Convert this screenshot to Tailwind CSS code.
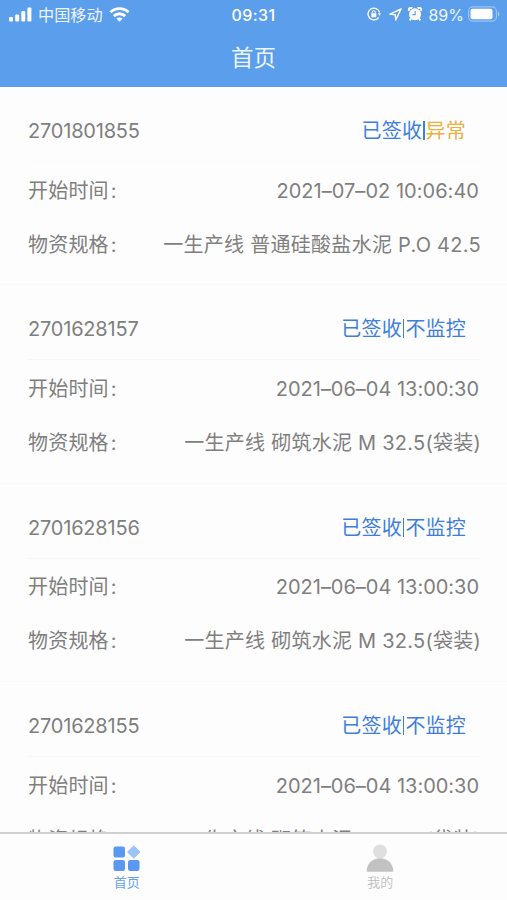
<!DOCTYPE html>
<html lang="zh-CN">
<head>
    <meta charset="UTF-8">
    <meta name="viewport" content="width=device-width, initial-scale=1.0">
    <title>首页</title>
    <script src="https://cdn.jsdelivr.net/npm/@tailwindcss/browser@4"></script>
</head>
<body class="bg-[#fdfdfd] font-['Inter','Noto_Sans_CJK_SC',sans-serif]">
<div class="flex flex-col h-[900px] w-[507px] overflow-hidden">
    <!-- 顶部 -->
    <header class="h-[87px] shrink-0 bg-[#5b9eeb] text-white">
        <div class="h-7 flex items-center justify-between pl-[9px] pr-[7px]">
            <div class="flex items-center w-[180px]">
                <svg class="w-[23px] h-[15px]" viewBox="0 0 23 15" fill="#fff">
                    <rect x="0" y="10" width="4" height="4.5" rx="1"/>
                    <rect x="6.2" y="7.5" width="4" height="7" rx="1"/>
                    <rect x="12.3" y="4" width="4" height="10.5" rx="1"/>
                    <rect x="18.4" y="0.5" width="4" height="14" rx="1"/>
                </svg>
                <span class="ml-[6px] pt-px text-[16.2px] leading-7 text-white/90">中国移动</span>
                <svg class="ml-[6px] w-[21px] h-[15px]" viewBox="0 0 20 15" fill="none" stroke="#fff" stroke-width="2.9">
                    <path d="M1 5.3C6 .4 14 .4 19 5.3"/>
                    <path d="M4.3 9.1c3.2-3.1 8.2-3.1 11.4 0"/>
                    <path d="M10 14.7 6.9 11.6c1.8-1.5 4.4-1.5 6.2 0z" fill="#fff" stroke="none"/>
                </svg>
            </div>
            <span class="pt-px text-base font-medium leading-7 tracking-[0.4px]">09:31</span>
            <div class="flex items-center justify-end w-[182px]">
                <svg class="w-[14px] h-[14px]" viewBox="0 0 14 14" fill="none" stroke="#fff" stroke-width="1.3">
                    <path d="M11.8 10.300A5.900 5.900 0 1 1 12.600 5.400"/>
                    <path d="M10.800 6.200h3.200l-1.400 2.500z" fill="#fff" stroke="none"/>
                    <rect x="4.300" y="6.200" width="5" height="4" rx=".6" fill="#fff" stroke="none"/>
                    <path d="M5.300 6.400V5.200a1.500 1.500 0 0 1 3 0v1.200" stroke-width="1"/>
                </svg>
                <svg class="ml-2 w-[13px] h-[13px]" viewBox="0 0 13 13" fill="none" stroke="#fff" stroke-width="1.5" stroke-linejoin="round">
                    <path d="M12 1 1 6.1l5.3.6.5 5.3z"/>
                </svg>
                <svg class="ml-[6px] w-[14px] h-[14px]" viewBox="0 0 14 14">
                    <circle cx="7" cy="7.3" r="6" fill="#fff"/>
                    <path d="M1.200 3.800a2 2 0 0 1 3-2.600M12.800 3.800a2 2 0 0 0-3-2.600M3 11.500 1.700 13.300M11 11.500l1.300 1.800" stroke="#fff" stroke-width="2" fill="none"/>
                    <path d="M7.2 4v3.6H4.4" fill="none" stroke="#5b9eeb" stroke-width="1.1"/>
                </svg>
                <span class="ml-[6px] pt-px text-[16px] leading-7 text-white/90">89%</span>
                <svg class="ml-1 w-8 h-4" viewBox="0 0 32 16">
                    <rect x=".6" y=".9" width="27.8" height="14.2" rx="4" fill="none" stroke="#fff" stroke-opacity=".4" stroke-width="1.1"/>
                    <rect x="2.5" y="2.7" width="22" height="10.6" rx="2" fill="#fff"/>
                    <path d="M30 5.5c1.7.6 1.7 4.4 0 5z" fill="#fff" fill-opacity=".5"/>
                </svg>
            </div>
        </div>
        <h1 class="pt-px text-center text-[22.5px] leading-[58px] text-white/90">首页</h1>
    </header>

    <!-- 运单列表 -->
    <main class="flex-1 min-h-0 overflow-hidden text-xl text-[#7f7f7f]">
        <section class="h-[198.4px] border-b border-[#fafafa]">
            <div class="h-[75px] pt-[14px] mx-7 pr-[13px] flex items-center justify-between border-b border-[#fbfbfb]">
                <span class="tracking-[-0.2px]">2701801855</span>
                <span class="text-[#3f7fdc] tracking-[0.2px]">已签收<span class="inline-block w-[1.5px] h-[19px] mx-px align-[-2px] bg-[#3f7fdc]"></span><span class="text-[#ebb040]">异常</span></span>
            </div>
            <div class="h-[54px] pt-[3px] mx-7 flex items-center justify-between">
                <span class="tracking-[0.2px]">开始时间<span class="ml-0.5">:</span></span>
                <span class="tracking-[0.03px]">2021–07–02 10:06:40</span>
            </div>
            <div class="h-[54px] pt-[3px] mx-7 flex items-center justify-between">
                <span class="tracking-[0.2px]">物资规格<span class="ml-0.5">:</span></span>
                <span class="-mr-0.5 tracking-[0.28px]">一生产线 普通硅酸盐水泥 P.O 42.5</span>
            </div>
        </section>
        <section class="h-[198.4px] border-b border-[#fafafa]">
            <div class="h-[75px] pt-[14px] mx-7 pr-[13px] flex items-center justify-between border-b border-[#f7f7f7]">
                <span class="tracking-[-0.2px]">2701628157</span>
                <span class="text-[#3f7fdc] tracking-[0.2px]">已签收<span class="inline-block w-[1.5px] h-[19px] mx-px align-[-2px] bg-[#3f7fdc]"></span>不监控</span>
            </div>
            <div class="h-[54px] pt-[3px] mx-7 flex items-center justify-between">
                <span class="tracking-[0.2px]">开始时间<span class="ml-0.5">:</span></span>
                <span class="tracking-[-0.02px]">2021–06–04 13:00:30</span>
            </div>
            <div class="h-[54px] pt-[3px] mx-7 flex items-center justify-between">
                <span class="tracking-[0.2px]">物资规格<span class="ml-0.5">:</span></span>
                <span class="-mr-0.5 tracking-[0.25px]">一生产线 砌筑水泥 M 32.5(袋装)</span>
            </div>
        </section>
        <section class="h-[198.4px] border-b border-[#fafafa]">
            <div class="h-[75px] pt-[14px] mx-7 pr-[13px] flex items-center justify-between border-b border-[#f7f7f7]">
                <span class="tracking-[-0.2px]">2701628156</span>
                <span class="text-[#3f7fdc] tracking-[0.2px]">已签收<span class="inline-block w-[1.5px] h-[19px] mx-px align-[-2px] bg-[#3f7fdc]"></span>不监控</span>
            </div>
            <div class="h-[54px] pt-[3px] mx-7 flex items-center justify-between">
                <span class="tracking-[0.2px]">开始时间<span class="ml-0.5">:</span></span>
                <span class="tracking-[-0.02px]">2021–06–04 13:00:30</span>
            </div>
            <div class="h-[54px] pt-[3px] mx-7 flex items-center justify-between">
                <span class="tracking-[0.2px]">物资规格<span class="ml-0.5">:</span></span>
                <span class="-mr-0.5 tracking-[0.25px]">一生产线 砌筑水泥 M 32.5(袋装)</span>
            </div>
        </section>
        <section class="h-[198.4px]">
            <div class="h-[75px] pt-[14px] mx-7 pr-[13px] flex items-center justify-between border-b border-[#f7f7f7]">
                <span class="tracking-[-0.2px]">2701628155</span>
                <span class="text-[#3f7fdc] tracking-[0.2px]">已签收<span class="inline-block w-[1.5px] h-[19px] mx-px align-[-2px] bg-[#3f7fdc]"></span>不监控</span>
            </div>
            <div class="h-[54px] pt-[3px] mx-7 flex items-center justify-between">
                <span class="tracking-[0.2px]">开始时间<span class="ml-0.5">:</span></span>
                <span class="tracking-[-0.02px]">2021–06–04 13:00:30</span>
            </div>
            <div class="h-[54px] pt-[3px] mx-7 flex items-center justify-between">
                <span class="tracking-[0.2px]">物资规格<span class="ml-0.5">:</span></span>
                <span class="-mr-0.5 tracking-[0.25px]">一生产线 砌筑水泥 M 32.5(袋装)</span>
            </div>
        </section>
    </main>

    <!-- 底部导航 -->
    <nav class="h-[68px] shrink-0 border-t-2 border-[#cfcfcf] bg-[#fdfdfd] grid grid-cols-2 text-[13px]">
        <a class="flex flex-col items-center pt-[11px] text-[#67a2ee]">
            <svg class="w-7 h-[27px]" viewBox="0 0 28 27" fill="#5b98f0">
                <rect x=".5" y="1.5" width="11.5" height="11" rx="2.2"/>
                <rect x=".5" y="15" width="11.5" height="11" rx="2.2"/>
                <rect x="15" y="15" width="11.5" height="11" rx="2.2"/>
                <rect x="16" y="2.2" width="9.6" height="9.6" rx="1" transform="rotate(45 20.8 7)" fill="#9cc3fa"/>
            </svg>
            <span class="leading-[20px]">首页</span>
        </a>
        <a class="flex flex-col items-center pt-[10px] text-[#c4c4c4]">
            <svg class="w-7 h-7" viewBox="0 0 28 28">
                <circle cx="14" cy="7.500" r="7" fill="#dfdfdf"/>
                <path d="M.6 27C1.200 19.400 6.500 14.300 14 14.300S26.800 19.400 27.400 27q0 .8-.8.8H1.400q-.8 0-.8-.8z" fill="#c2c2c2"/>
            </svg>
            <span class="leading-[20px]">我的</span>
        </a>
    </nav>
</div>
</body>
</html>
